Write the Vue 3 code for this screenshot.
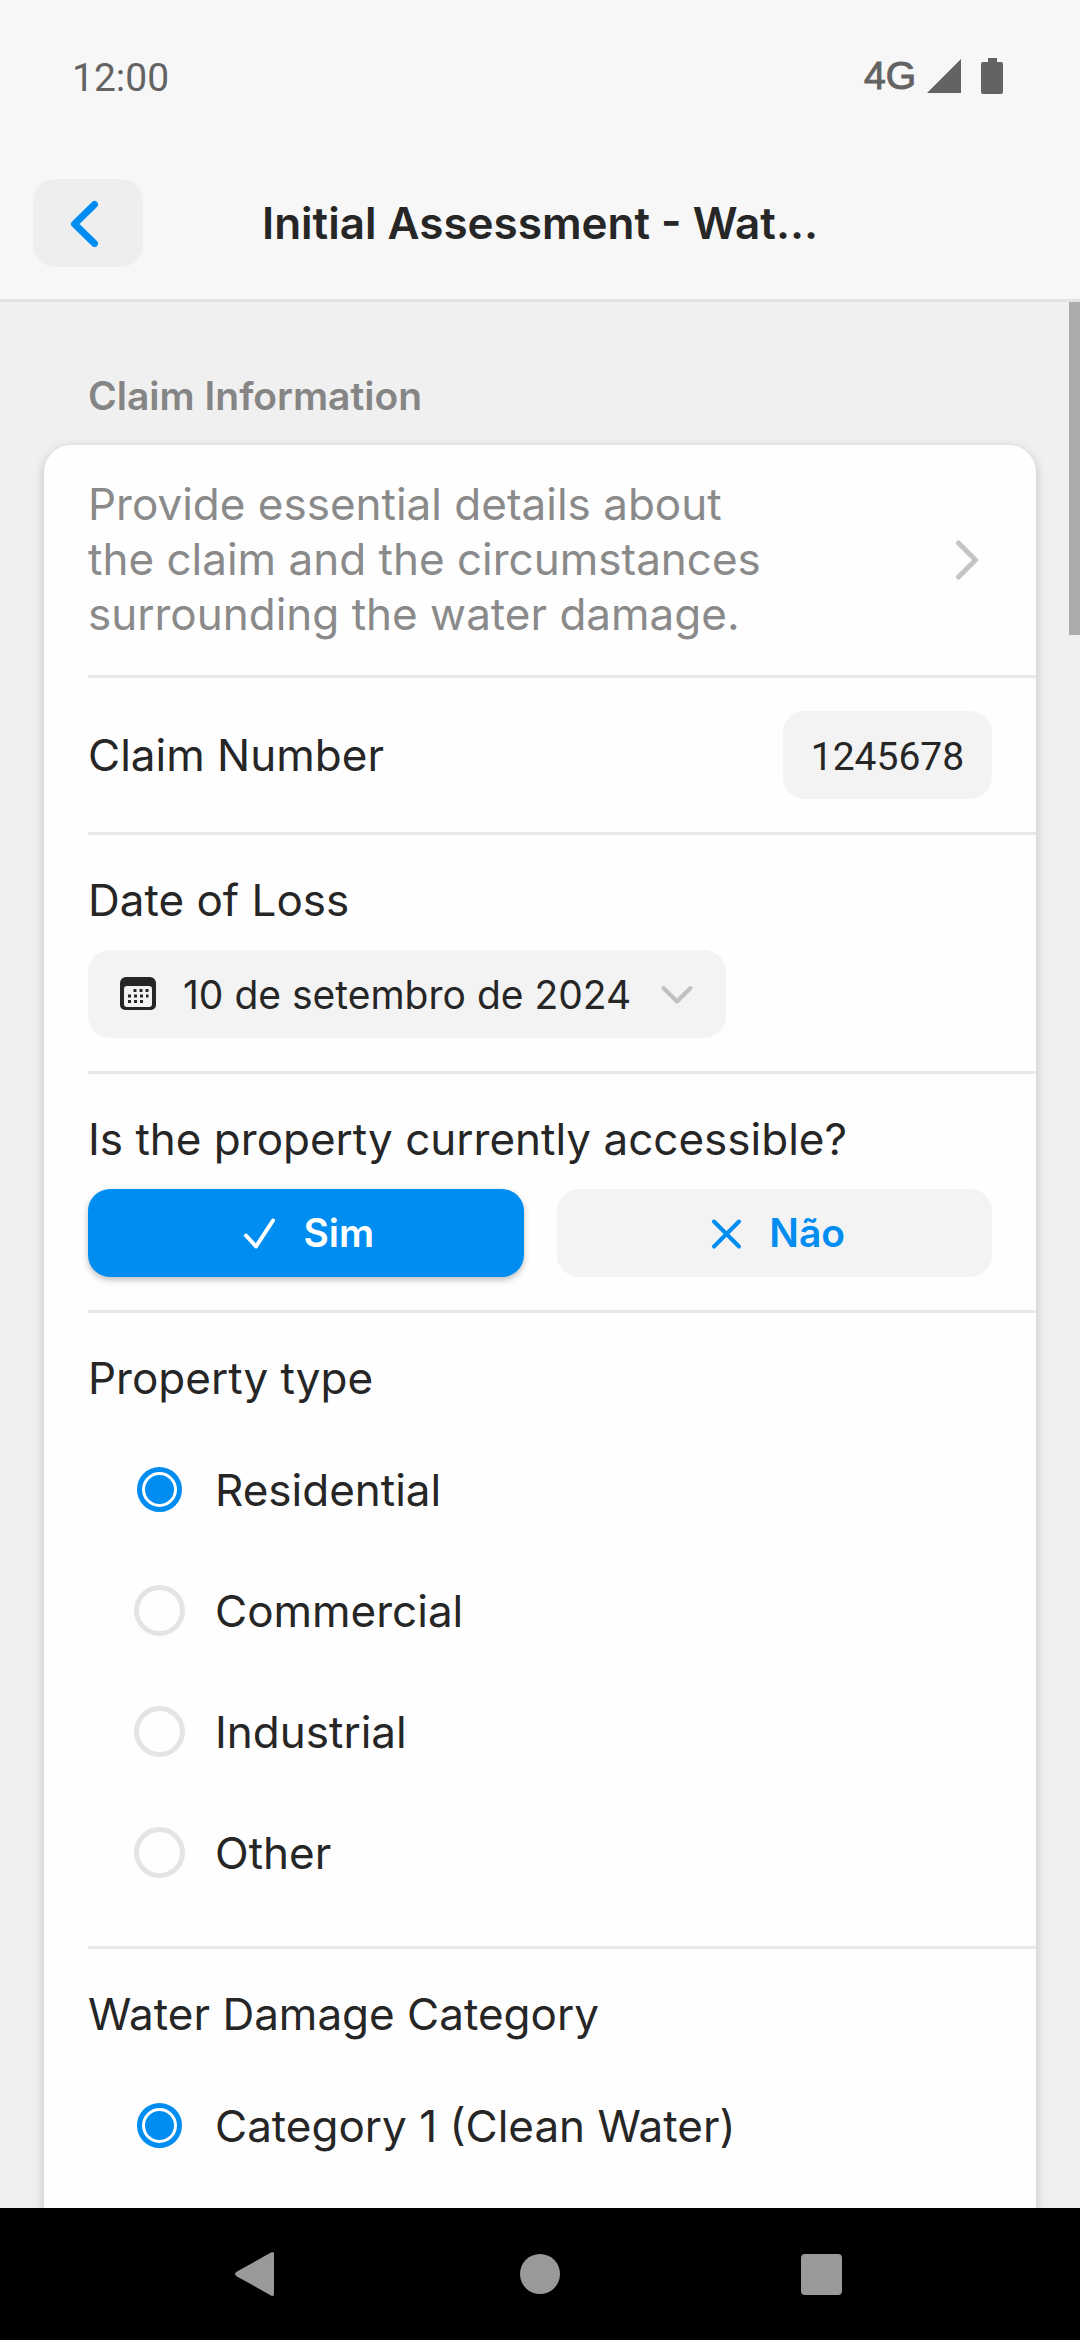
<script setup>
import { ref } from 'vue'

const claimNumber = ref('1245678')
const accessible = ref(true)
const propertyType = ref('Residential')
const category = ref('Category 1 (Clean Water)')
const propertyTypes = ['Residential', 'Commercial', 'Industrial', 'Other']
const categories = ['Category 1 (Clean Water)']
</script>

<template>
  <div class="screen">
    <header class="top">
      <div class="status">
        <span class="clock">12:00</span>
        <div class="indicators">
          <span class="network">4G</span>
          <svg class="signal" width="34" height="34" viewBox="0 0 34 34" aria-hidden="true">
            <path d="M34 0V34H0Z" />
          </svg>
          <svg class="battery" width="22" height="36" viewBox="0 0 22 36" aria-hidden="true">
            <path d="M7 0h9v4h4a2 2 0 0 1 2 2v28a2 2 0 0 1-2 2H2a2 2 0 0 1-2-2V6a2 2 0 0 1 2-2h5z" />
          </svg>
        </div>
      </div>
      <div class="bar">
        <button class="back" type="button" aria-label="Back">
          <svg width="44" height="48" viewBox="0 0 44 48" aria-hidden="true">
            <path d="M28.500 5.500L8.500 25L28.500 44.500" />
          </svg>
        </button>
        <h1 class="title">Initial Assessment - Wat…</h1>
      </div>
    </header>

    <main class="content">
      <h2 class="section-title">Claim Information</h2>
      <div class="card">
        <a class="row intro" href="#">
          <span class="intro-text">Provide essential details about the claim and the circumstances surrounding the water damage.</span>
          <svg class="more" width="50" height="44" viewBox="0 0 50 44" aria-hidden="true">
            <path d="M16.500 5L33.500 22L16.500 39" />
          </svg>
        </a>

        <div class="row inline">
          <label class="label" for="claim-number">Claim Number</label>
          <input id="claim-number" v-model="claimNumber" class="field" type="text" />
        </div>

        <div class="row">
          <div id="date-label" class="label">Date of Loss</div>
          <button class="date" type="button" aria-describedby="date-label">
            <svg width="36" height="34" viewBox="0 0 36 34" aria-hidden="true">
              <path class="frame" d="M6 0h24a6 6 0 0 1 6 6v22a5 5 0 0 1-5 5H5a5 5 0 0 1-5-5V6a6 6 0 0 1 6-6zM7 9a3 3 0 0 0-3 3v15a3 3 0 0 0 3 3h22a3 3 0 0 0 3-3V12a3 3 0 0 0-3-3z" />
              <path class="dots" d="M13.500 13.500h15M8 19h20.500M8 24.500h15" />
            </svg>
            <span class="date-text">10 de setembro de 2024</span>
            <svg class="down" width="44" height="32" viewBox="0 0 44 32" aria-hidden="true">
              <path d="M8.500 10L22 23.500L35.500 10" />
            </svg>
          </button>
        </div>

        <div class="row">
          <div id="access-label" class="label">Is the property currently accessible?</div>
          <div class="toggle" role="group" aria-labelledby="access-label">
            <button type="button" class="option" :class="{ on: accessible }" :aria-pressed="accessible" @click="accessible = true">
              <svg width="44" height="44" viewBox="0 0 44 44" aria-hidden="true">
                <path d="M9 24.500L19 35.500L36 9.500" />
              </svg>
              Sim
            </button>
            <button type="button" class="option" :class="{ on: !accessible }" :aria-pressed="!accessible" @click="accessible = false">
              <svg width="44" height="44" viewBox="0 0 44 44" aria-hidden="true">
                <path d="M11 10.500L36 35.500M36 10.500L11 35.500" />
              </svg>
              Não
            </button>
          </div>
        </div>

        <div class="row">
          <div id="type-label" class="label">Property type</div>
          <div class="choices" role="radiogroup" aria-labelledby="type-label">
            <label v-for="t in propertyTypes" :key="t" class="choice">
              <span class="mark"><input v-model="propertyType" class="radio" type="radio" name="property-type" :value="t" /></span>
              {{ t }}
            </label>
          </div>
        </div>

        <div class="row">
          <div id="category-label" class="label">Water Damage Category</div>
          <div class="choices" role="radiogroup" aria-labelledby="category-label">
            <label v-for="c in categories" :key="c" class="choice">
              <span class="mark"><input v-model="category" class="radio" type="radio" name="category" :value="c" /></span>
              {{ c }}
            </label>
          </div>
        </div>
      </div>
      <div class="scroll-thumb"></div>
    </main>

    <nav class="system">
      <button type="button" aria-label="System back">
        <svg width="48" height="48" viewBox="0 0 48 48" aria-hidden="true">
          <path d="M36 2.500Q39 1 39 4V44Q39 47 36 45.500L2 26.500Q-2 24 2 21.500Z" />
        </svg>
      </button>
      <button type="button" aria-label="Home">
        <svg width="48" height="48" viewBox="0 0 48 48" aria-hidden="true"><circle cx="24" cy="24" r="20" /></svg>
      </button>
      <button type="button" aria-label="Recent apps">
        <svg width="48" height="48" viewBox="0 0 48 48" aria-hidden="true"><rect x="4" y="4" width="41" height="41" rx="4" /></svg>
      </button>
    </nav>
  </div>
</template>

<style>
body {
  margin: 0;
  background: #000;
}
</style>

<style scoped>
.screen {
  display: flex;
  flex-direction: column;
  height: 100vh;
  overflow: hidden;
  background: #f0f0f0;
  color: #262626;
  font-family: Inter, "Liberation Sans", sans-serif;
  font-size: 44px;
  line-height: 54px;
  font-optical-sizing: none;
}
.screen * {
  box-sizing: border-box;
}
button,
input {
  margin: 0;
  padding: 0;
  border: 0;
  font: inherit;
  color: inherit;
}
svg {
  display: block;
  flex: none;
  fill: none;
  stroke-linecap: round;
  stroke-linejoin: round;
}

.top {
  flex: none;
  background: #f7f7f7;
  border-bottom: 3px solid #e2e2e2;
}
.status {
  display: flex;
  justify-content: space-between;
  align-items: center;
  padding: 51px 77px 46px 72px;
  color: #636363;
  line-height: 46px;
}
.clock {
  padding-top: 4px;
  font-family: Roboto, sans-serif;
  font-size: 39px;
}
.indicators {
  display: flex;
  align-items: center;
}
.network {
  font-family: "Liberation Sans", sans-serif;
  font-size: 39px;
  -webkit-text-stroke: 1px currentColor;
}
.signal {
  margin: 0 20px 0 11px;
  fill: #636363;
}
.battery {
  fill: #636363;
}
.bar {
  display: grid;
  grid-template-columns: 110px 1fr 110px;
  align-items: center;
  padding: 32px 33px;
}
.back {
  display: flex;
  align-items: center;
  justify-content: center;
  height: 88px;
  border-radius: 22px;
  background: #eee;
}
.back path {
  stroke: #008df2;
  stroke-width: 7;
}
.title {
  margin: 0;
  font-size: 44px;
  font-weight: 600;
  text-align: center;
}

.content {
  position: relative;
  flex: 1;
  min-height: 0;
  display: flex;
  flex-direction: column;
  overflow: hidden;
  padding: 66px 44px 0;
}
.section-title {
  margin: 0;
  padding: 0 44px 22px;
  color: #858585;
  font-size: 39px;
  font-weight: 600;
  line-height: 55px;
}
.card {
  flex: 1 0 auto;
  padding-left: 44px;
  border-radius: 27px 27px 0 0;
  background: #fefefe;
  box-shadow: 0 3px 11px rgba(0, 0, 0, 0.2);
}
.row {
  padding: 38px 44px 33px 0;
  border-bottom: 3px solid #e8e8e8;
}
.row:last-child {
  border-bottom: 0;
}
.inline,
.intro {
  display: flex;
  align-items: center;
  justify-content: space-between;
  padding-top: 33px;
}
.intro {
  padding: 32px 44px 33px 0;
  color: #8a8a8a;
  line-height: 55px;
  text-decoration: none;
}
.intro-text {
  max-width: 76%;
}
.more path {
  stroke: #c4c4c4;
  stroke-width: 5;
}
.field {
  width: 209px;
  height: 88px;
  padding-top: 3px;
  border-radius: 22px;
  background: #f3f3f3;
  font-family: Roboto, sans-serif;
  font-size: 39px;
  text-align: center;
}
.date {
  display: flex;
  align-items: center;
  height: 88px;
  margin-top: 23px;
  padding: 0 27px 0 32px;
  border-radius: 22px;
  background: #f3f3f3;
  font-size: 39px;
}
.frame {
  fill: #262626;
  fill-rule: evenodd;
}
.dots {
  stroke: #262626;
  stroke-width: 3;
  stroke-linecap: butt;
  stroke-dasharray: 3 3;
}
.date-text {
  margin: 0 24px 0 27px;
  padding-top: 2px;
}
.down path {
  stroke: #c0c0c0;
  stroke-width: 4;
}
.toggle {
  display: flex;
  gap: 33px;
  margin-top: 23px;
}
.option {
  flex: 1;
  display: flex;
  align-items: center;
  justify-content: center;
  gap: 22px;
  height: 88px;
  border-radius: 22px;
  background: #f3f3f3;
  color: #008df2;
  font-size: 39px;
  font-weight: 600;
}
.option path {
  stroke: currentColor;
  stroke-width: 4;
}
.option.on {
  background: #008df2;
  color: #fff;
  box-shadow: 0 3px 6px rgba(0, 0, 0, 0.25);
}
.choices {
  display: flex;
  flex-direction: column;
  margin-top: 24px;
  padding-left: 46px;
}
.choice {
  display: flex;
  align-items: center;
  gap: 30px;
  height: 121px;
}
.mark {
  display: flex;
  align-items: center;
  justify-content: center;
  width: 51px;
}
.radio {
  appearance: none;
  width: 51px;
  height: 51px;
  border: 5px solid #e4e4e4;
  border-radius: 50%;
}
.radio:checked {
  width: 45px;
  height: 45px;
  padding: 3px;
  border-color: #008df2;
  background: #008df2 content-box;
}
.scroll-thumb {
  position: absolute;
  top: 0;
  right: 0;
  width: 11px;
  height: 333px;
  background: #acacac;
}

.system {
  flex: none;
  display: flex;
  justify-content: center;
  height: 132px;
  background: #000;
}
.system button {
  display: flex;
  align-items: center;
  justify-content: center;
  width: 26%;
  background: none;
}
.system svg {
  fill: #999;
}
</style>
